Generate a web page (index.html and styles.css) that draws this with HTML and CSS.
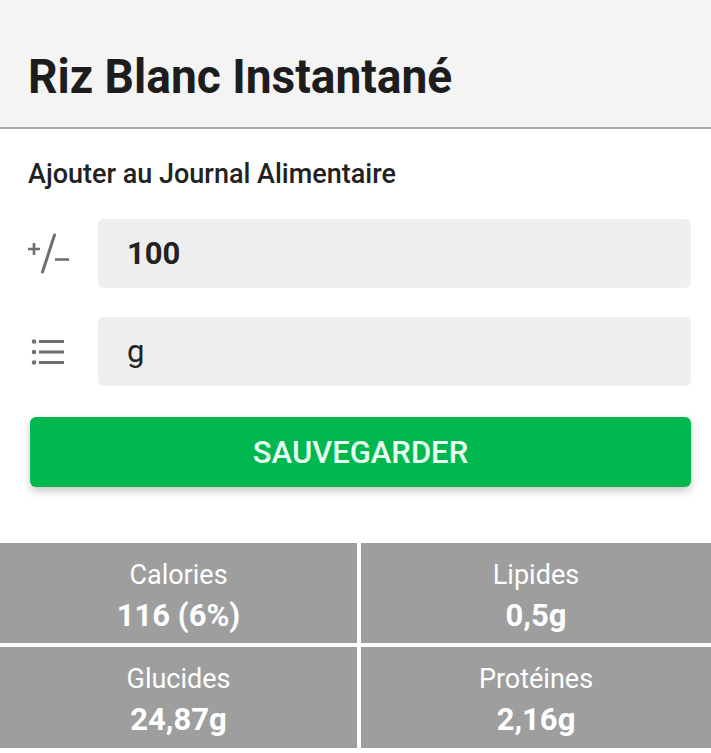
FILE: index.html
```html
<!DOCTYPE html>
<html lang="fr">
<head>
<meta charset="utf-8">
<link rel="stylesheet" href="styles.css">
</head>
<body>
<header class="header">
  <h1 class="title">Riz Blanc Instantané</h1>
</header>
<main class="form">
  <h2 class="subtitle">Ajouter au Journal Alimentaire</h2>
  <div class="row">
    <div class="icon">
      <svg width="44" height="42" viewBox="0 0 44 42">
        <path d="M0 16h12M6 10v12" stroke="#6e6e6e" stroke-width="2.6" fill="none"/>
        <path d="M26.5 2L14.5 39" stroke="#6e6e6e" stroke-width="3" stroke-linecap="round" fill="none"/>
        <path d="M27 26.5h14" stroke="#6e6e6e" stroke-width="2.6" fill="none"/>
      </svg>
    </div>
    <div class="field field-bold">100</div>
  </div>
  <div class="row">
    <div class="icon">
      <svg width="40" height="28" viewBox="0 0 40 28">
        <circle cx="6" cy="3.5" r="2.2" fill="#6e6e6e"/>
        <circle cx="6" cy="14" r="2.2" fill="#6e6e6e"/>
        <circle cx="6" cy="24.5" r="2.2" fill="#6e6e6e"/>
        <path d="M11 3.5h25M11 14h25M11 24.5h25" stroke="#6e6e6e" stroke-width="2.8" fill="none"/>
      </svg>
    </div>
    <div class="field">g</div>
  </div>
  <button class="save">SAUVEGARDER</button>
</main>
<section class="stats">
  <div class="cell"><span class="label">Calories</span><span class="value">116 (6%)</span></div>
  <div class="cell"><span class="label">Lipides</span><span class="value">0,5g</span></div>
  <div class="cell"><span class="label">Glucides</span><span class="value">24,87g</span></div>
  <div class="cell"><span class="label">Protéines</span><span class="value">2,16g</span></div>
</section>
</body>
</html>
```
FILE: styles.css
```css
* { box-sizing: border-box; }
html, body { margin: 0; padding: 0; background: #fff; }
body { font-family: Roboto, "Noto Sans", sans-serif; color: #222; width: 711px; overflow: hidden; }

.header {
  height: 129px;
  background: #f4f4f4;
  border-bottom: 2px solid #a9a9a9;
  padding: 49px 0 0 28px;
}
.title {
  margin: 0;
  font-size: 48px;
  font-weight: 700;
  line-height: 55px;
  color: #1d1d1d;
  transform: scaleX(0.96);
  transform-origin: left center;
  white-space: nowrap;
}

.form {
  padding: 26px 20px 0 28px;
}
.subtitle {
  margin: 0 0 26px 0;
  font-size: 27px;
  font-weight: 500;
  line-height: 38px;
  color: #222;
}
.row {
  display: flex;
  align-items: center;
  margin-bottom: 29px;
}
.icon {
  width: 70px;
  display: flex;
  align-items: center;
}
.field {
  flex: 1;
  height: 69px;
  background: #efefef;
  border-radius: 6px;
  display: flex;
  align-items: center;
  padding-left: 29px;
  font-size: 31px;
  color: #222;
}
.field-bold { font-weight: 700; }

.save {
  display: block;
  width: 661px;
  margin: 31px 0 0 2px;
  height: 70px;
  border: none;
  border-radius: 6px;
  background: #00b84f;
  color: #e8fff1;
  font-family: Roboto, sans-serif;
  font-size: 31px;
  font-weight: 500;
  box-shadow: 0 4px 8px rgba(0,0,0,0.22);
  padding: 0;
}

.stats {
  margin-top: 56px;
  display: grid;
  grid-template-columns: 357px 350px;
  grid-template-rows: 100px 101px;
  column-gap: 4px;
  row-gap: 4px;
}
.cell {
  background: #9e9e9e;
  display: flex;
  flex-direction: column;
  align-items: center;
  padding-top: 17px;
  color: #fff;
}
.label {
  font-size: 27px;
  line-height: 30px;
}
.value {
  font-size: 31px;
  font-weight: 700;
  line-height: 40px;
  margin-top: 6px;
}
```
